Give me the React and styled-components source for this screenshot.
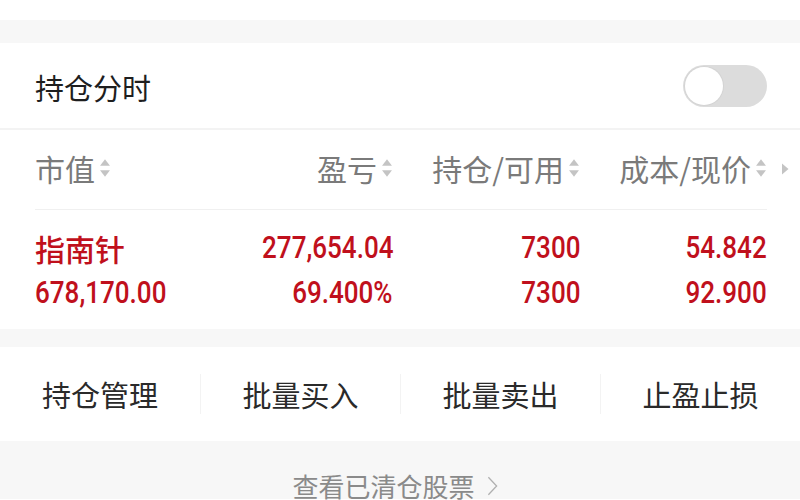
import styled, { createGlobalStyle } from "styled-components";

const GlobalStyle = createGlobalStyle`
  html, body {
    margin: 0;
    padding: 0;
    background: #ffffff;
  }
  body {
    font-family: "Noto Sans CJK SC", "Noto Sans", sans-serif;
  }
`;

const columns = [
  { id: "value", title: "市值", align: "left" },
  { id: "pnl", title: "盈亏", align: "right" },
  { id: "hold", title: "持仓/可用", align: "right" },
  { id: "cost", title: "成本/现价", align: "right" },
];

const positions = [
  {
    id: "znz",
    rows: [
      ["指南针", "277,654.04", "7300", "54.842"],
      ["678,170.00", "69.400%", "7300", "92.900"],
    ],
  },
];

const actions = ["持仓管理", "批量买入", "批量卖出", "止盈止损"];

const SortIcon = () => (
  <SortSvg viewBox="0 0 10 20" aria-hidden="true">
    <path d="M5 2 L9.5 8 H0.5 Z" fill="#c4c4c4" />
    <path d="M5 18 L9.5 12 H0.5 Z" fill="#c4c4c4" />
  </SortSvg>
);

const App = () => {
  return (
    <Page>
      <GlobalStyle />
      <TopSpace />
      <Band height={23} />
      <Card>
        <TitleRow>
          <Title>持仓分时</Title>
          <Toggle>
            <Knob />
          </Toggle>
        </TitleRow>
        <Table>
          <HeaderRow>
            {columns.map((col) => (
              <HeaderCell key={col.id} align={col.align}>
                {col.title}
                <SortIcon />
              </HeaderCell>
            ))}
            <MoreArrow viewBox="0 0 8 12" aria-hidden="true">
              <path d="M1 0.5 L7.5 6 L1 11.5 Z" fill="#c4c4c4" />
            </MoreArrow>
          </HeaderRow>
          {positions.map((p) => (
            <Position key={p.id}>
              {p.rows.map((row, ri) =>
                row.map((cell, ci) => (
                  <DataCell key={`${ri}-${ci}`} align={columns[ci].align}>
                    {ri === 0 && ci === 0 ? (
                      <StockName>{cell}</StockName>
                    ) : (
                      <Num align={columns[ci].align}>{cell}</Num>
                    )}
                  </DataCell>
                ))
              )}
            </Position>
          ))}
        </Table>
      </Card>
      <Band height={18} />
      <Actions>
        {actions.map((a) => (
          <ActionButton key={a}>{a}</ActionButton>
        ))}
      </Actions>
      <Footer>
        <FooterLink>
          查看已清仓股票
          <Chevron viewBox="0 0 12 22" aria-hidden="true">
            <path
              d="M1.5 1.5 L10.5 11 L1.5 20.5"
              fill="none"
              stroke="#b0b0b0"
              strokeWidth="1.4"
            />
          </Chevron>
        </FooterLink>
      </Footer>
    </Page>
  );
};

const Page = styled.div`
  width: 800px;
  height: 500px;
  overflow: hidden;
  background: #ffffff;
`;

const TopSpace = styled.div`
  height: 20px;
  background: #ffffff;
`;

const Band = styled.div`
  height: ${({ height }) => height}px;
  background: #f7f7f7;
`;

const Card = styled.div`
  background: #ffffff;
`;

const TitleRow = styled.div`
  height: 85px;
  display: flex;
  align-items: center;
  justify-content: space-between;
  padding: 0 33px 0 35px;
  border-bottom: 2px solid #f3f3f3;
`;

const Title = styled.div`
  font-size: 29px;
  color: #1e1e1e;
  line-height: 1;
  margin-top: 3px;
`;

const Toggle = styled.div`
  width: 84px;
  height: 42px;
  border-radius: 21px;
  background: #dcdcdc;
  display: flex;
  align-items: center;
  padding: 0 2px;
  box-sizing: border-box;
`;

const Knob = styled.div`
  width: 38px;
  height: 38px;
  border-radius: 50%;
  background: #ffffff;
  box-shadow: 0 0 0 1px #d4d4d4;
`;

const Table = styled.div`
  padding: 0 33px 0 35px;
`;

const HeaderRow = styled.div`
  position: relative;
  height: 79px;
  display: grid;
  grid-template-columns: 170px 188px 187px 187px;
  align-items: center;
  border-bottom: 1px solid #f0f0f0;
`;

const HeaderCell = styled.div`
  display: flex;
  align-items: center;
  justify-content: ${({ align }) => (align === "right" ? "flex-end" : "flex-start")};
  gap: 4px;
  font-size: 30px;
  color: #7a7a7a;
  line-height: 1;
  margin-top: -4px;
`;

const SortSvg = styled.svg`
  width: 12px;
  height: 22px;
  flex-shrink: 0;
`;

const MoreArrow = styled.svg`
  position: absolute;
  right: -22px;
  top: 33px;
  width: 8px;
  height: 12px;
`;

const Position = styled.div`
  display: grid;
  grid-template-columns: 170px 188px 187px 187px;
  grid-auto-rows: 45px;
  align-items: center;
  padding: 15px 2px 14px 0;
`;

const DataCell = styled.div`
  text-align: ${({ align }) => align};
  color: #c0101c;
  white-space: nowrap;
  line-height: 1;
`;

const StockName = styled.span`
  font-family: "Noto Sans CJK SC", sans-serif;
  font-size: 30px;
  font-weight: 500;
`;

const Num = styled.span`
  display: inline-block;
  font-family: "Roboto", sans-serif;
  font-size: 31px;
  font-weight: 500;
  transform: scaleX(0.84);
  transform-origin: ${({ align }) => (align === "right" ? "right" : "left")} center;
`;

const Actions = styled.div`
  height: 94px;
  display: grid;
  grid-template-columns: repeat(4, 1fr);
  align-items: center;
  background: #ffffff;
`;

const ActionButton = styled.div`
  text-align: center;
  font-size: 29px;
  color: #2a2a2a;
  line-height: 40px;
  & + & {
    border-left: 1px solid #f3f3f3;
  }
`;

const Footer = styled.div`
  height: 58px;
  background: #f7f7f7;
  display: flex;
  justify-content: center;
  padding-top: 29px;
  box-sizing: border-box;
`;

const FooterLink = styled.div`
  display: flex;
  align-items: center;
  gap: 12px;
  height: 32px;
  font-size: 26px;
  color: #8a8a8a;
  line-height: 1;
  margin-left: -10px;
`;

const Chevron = styled.svg`
  width: 11px;
  height: 22px;
`;

export default App;
